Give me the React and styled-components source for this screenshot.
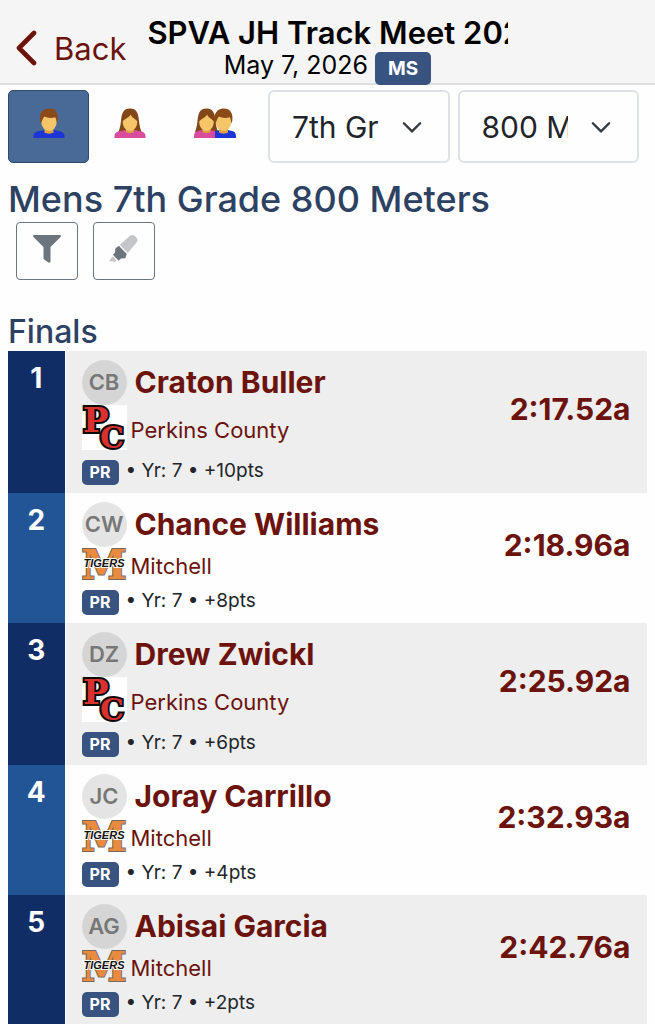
import React from 'react';
import styled, { createGlobalStyle } from 'styled-components';

const GlobalStyle = createGlobalStyle`
  * { box-sizing: border-box; }
  body {
    margin: 0;
    background: #fefefe;
    color: #212529;
    font-family: Inter, "Liberation Sans", sans-serif;
  }
  button, select { font-family: inherit; }
`;

const Header = styled.header`
  display: grid;
  grid-template-columns: 1fr minmax(0, 55%) 1fr;
  padding-top: 14px;
  height: 85px;
  background: #f5f5f5;
  border-bottom: 2px solid #dedede;
`;

const BackButton = styled.button`
  display: flex;
  align-items: center;
  gap: 17px;
  height: 68px;
  padding: 0 0 0 16px;
  border: 0;
  background: none;
  color: #6b130c;
  font-size: 31px;
  white-space: nowrap;
`;

const TitleBlock = styled.div`
  text-align: center;
`;

const Title = styled.h1`
  margin: 0;
  overflow: hidden;
  color: #000;
  font-size: 31px;
  font-weight: 600;
  line-height: 38px;
  text-align: left;
  white-space: nowrap;
`;

const SubTitle = styled.div`
  display: flex;
  justify-content: center;
  gap: 7px;
  color: #000;
  font-size: 25px;
  line-height: 27px;
  white-space: nowrap;
`;

const LevelBadge = styled.span`
  height: 33px;
  padding: 0 13px;
  border-radius: 5px;
  background: #385380;
  color: #fff;
  font-size: 19px;
  font-weight: 700;
  line-height: 33px;
`;

const Toolbar = styled.div`
  display: flex;
  gap: 8px;
  padding: 5px 16px 0 8px;
`;

const GenderGroup = styled.div`
  display: flex;
`;

const GenderButton = styled.button`
  display: flex;
  align-items: center;
  justify-content: center;
  width: ${p => (p.$wide ? 90 : 81)}px;
  height: 73px;
  padding: 0 0 8px;
  border: 1px solid ${p => (p.$active ? '#30486c' : 'transparent')};
  border-radius: 5px;
  background: ${p => (p.$active ? '#496997' : 'none')};
`;

const SelectBox = styled.label`
  position: relative;
  flex: 1;
  min-width: 0;

  svg {
    position: absolute;
    top: 27px;
    right: 28px;
    pointer-events: none;
  }
`;

const Select = styled.select`
  appearance: none;
  width: 100%;
  height: 73px;
  padding: 0 69px 0 22px;
  border: 2px solid #dee2e6;
  border-radius: 6px;
  background: #fefefe;
  color: #212529;
  font-size: 30px;
`;

const Main = styled.main`
  padding: 0 8px;
`;

const EventTitle = styled.h2`
  margin: 14px 0 0;
  color: #2d4262;
  font-size: 36px;
  font-weight: 500;
  line-height: 45px;
`;

const Actions = styled.div`
  display: flex;
  gap: 15px;
  padding: 0 8px;
`;

const ActionButton = styled.button`
  display: flex;
  align-items: center;
  justify-content: center;
  width: 62px;
  height: 58px;
  padding: 0 0 4px;
  border: 1px solid #6c757d;
  border-radius: 4px;
  background: none;
  color: #6c757d;
`;

const RoundTitle = styled.h3`
  margin: 32px 0 0;
  color: #2d4262;
  font-size: 32px;
  font-weight: 500;
  line-height: 39px;
`;

const Results = styled.table`
  width: 100%;
  border-collapse: collapse;
`;

const Row = styled.tr`
  background: #fefefe;

  &:nth-child(odd) { background: #eee; }
`;

const Place = styled.td`
  width: 57px;
  padding: 10px 0 0;
  border-right: 1px solid #fefefe;
  background: #225596;
  color: #fff;
  font-size: 28px;
  font-weight: 700;
  line-height: 34px;
  text-align: center;
  vertical-align: top;

  ${Row}:nth-child(odd) & { background: #112d66; }
`;

const Entry = styled.td`
  padding: 8px 0 8px 16px;
`;

const Athlete = styled.a`
  display: flex;
  align-items: center;
  gap: 8px;
  height: 46px;
  color: #6b130c;
  font-size: 30px;
  font-weight: 700;
  text-decoration: none;
  white-space: nowrap;
`;

const Avatar = styled.span`
  width: 45px;
  height: 45px;
  border-radius: 50%;
  background: rgba(0, 0, 0, .1);
  color: #777;
  font-size: 22px;
  font-weight: 600;
  line-height: 45px;
  text-align: center;
`;

const Team = styled.a`
  display: flex;
  align-items: center;
  gap: 4px;
  color: #6b130c;
  font-size: 22px;
  line-height: 27px;
  text-decoration: none;

  span { padding-top: 6px; }
`;

const Meta = styled.div`
  display: flex;
  gap: 7px;
  padding-top: 10px;
  font-size: 19px;
  line-height: 21px;
`;

const PrBadge = styled.span`
  width: 37px;
  height: 25px;
  border-radius: 5px;
  background: #385380;
  color: #fff;
  font-size: 16px;
  font-weight: 700;
  line-height: 25px;
  text-align: center;
`;

const Mark = styled.td`
  padding: 0 16px 26px 0;
  text-align: right;

  a {
    color: #6b130c;
    font-size: 30px;
    font-weight: 700;
    text-decoration: none;
  }
`;

const BackIcon = () => (
  <svg width="21" height="36" viewBox="0 0 21 36" fill="none" stroke="currentColor" strokeWidth="4.6" strokeLinecap="round" strokeLinejoin="round">
    <path d="M18 3 L3 18 L18 33" />
  </svg>
);

const Chevron = () => (
  <svg width="20" height="20" viewBox="0 0 16 16" fill="none" stroke="#343a40" strokeWidth="1.9" strokeLinecap="round" strokeLinejoin="round">
    <path d="m1.500 5 6.500 6.500L14.500 5" />
  </svg>
);

const FilterIcon = () => (
  <svg width="28" height="28" viewBox="0 0 28 28" fill="currentColor">
    <path d="M1.200 0h25.600c1 0 1.500 1.100.8 1.900L17.500 12v14.600c0 1-1.100 1.500-1.900 1l-4.400-3.100c-.4-.3-.7-.7-.7-1.200V12L.4 1.900C-.3 1.100.2 0 1.200 0z" />
  </svg>
);

const HighlighterIcon = () => (
  <svg width="30" height="28" viewBox="0 0 30 28" fill="currentColor">
    <path opacity=".4" d="M10.800 9.700 20.800 1.100c1.700-1.400 3.900-1.400 5.400.1l1.200 1.300c1.400 1.500 1.400 3.600 0 5.300L18.700 18z" />
    <path d="m9.800 10.800 8 8.200-1.600 4.200-4.300.3-2.200 2.200-5.800-5.900 2.200-2.200.2-4.100z" />
    <path opacity=".4" d="m3.700 21.600 3.800 3.800-1.600 1.600L0 26.100z" />
  </svg>
);

const ManHead = () => (
  <>
    <path d="M11 19h9v5.500c-2 1.500-7 1.500-9 0z" fill="#dda040" />
    <ellipse cx="15.500" cy="14" rx="7.800" ry="9" fill="#f4c669" />
    <path d="M7.500 15.500C4.500 8 8 1.800 13.500.7c7.500-1.400 13 3.300 10.200 14.800-.9-1.800-.6-4.200-1.900-6.200-3.600 1-8.400.7-10.900-.8-2 2-2.200 4.900-3.400 7z" fill="#8a4b18" />
  </>
);

const WomanHead = () => (
  <>
    <path d="M11.500 18h8v6c-2 1.500-6 1.500-8 0z" fill="#dda040" />
    <path d="M8.200 13.500c2-3 5.800-3.500 8-7 1.200 3.500 4.900 4 6.600 7 0 5.500-3.300 9.500-7.300 9.500s-7.300-4-7.300-9.500z" fill="#f4c669" />
  </>
);

const womanHair = 'M15.500.5C8 .5 7 7 6.500 13 6 18 5 21 4 24h23C26 21 25 18 24.500 13 24 7 23 .5 15.500.5z';

const ManIcon = () => (
  <svg width="32" height="30" viewBox="0 0 31 30">
    <path d="M0 30v-2c0-3 2.500-4.500 6.500-5l4.500-1h9l4.500 1c4 .5 6.500 2 6.500 5v2z" fill="#1c35d6" />
    <ManHead />
  </svg>
);

const WomanIcon = () => (
  <svg width="32" height="30" viewBox="0 0 31 30">
    <path d={womanHair} fill="#814719" />
    <path d="M0 30v-2c0-3 2.500-4.500 6.500-5l4.500-1h9l4.500 1c4 .5 6.500 2 6.500 5v2z" fill="#d94b9d" />
    <WomanHead />
  </svg>
);

const CoupleIcon = () => (
  <svg width="42" height="30" viewBox="0 0 42 30">
    <g transform="translate(-3 0)">
      <path d={womanHair} fill="#814719" />
    </g>
    <path d="M0 30v-2c0-3 1.500-4.500 4-5l4-1h8l5 1v7z" fill="#d94b9d" />
    <path d="M21 30v-7l5-1h8l4 1c2.500.5 4 2 4 5v2z" fill="#1c35d6" />
    <g transform="translate(-3 0)"><WomanHead /></g>
    <g transform="translate(14 0)"><ManHead /></g>
  </svg>
);

const PerkinsLogo = () => (
  <svg width="45" height="45" viewBox="0 0 45 45" fontFamily="DejaVu Serif, serif" fontWeight="700" fill="#d9322e" stroke="#0b0b0b" strokeWidth="4" paintOrder="stroke" role="img" aria-label="Perkins County">
    <rect width="45" height="45" fill="#fefefe" stroke="none" />
    <text x="1" y="27" fontSize="34">P</text>
    <text x="18" y="43" fontSize="30">C</text>
  </svg>
);

const MitchellLogo = () => (
  <svg width="45" height="33" viewBox="0 0 45 33" fontWeight="700" role="img" aria-label="Mitchell">
    <text x="22" y="32" textAnchor="middle" fontFamily="DejaVu Serif, serif" fontSize="41" fill="#e98b3e" stroke="#77685c" strokeWidth="2" paintOrder="stroke">M</text>
    <text x="22" y="20" textAnchor="middle" fontFamily="Liberation Sans, sans-serif" fontSize="11" fontStyle="italic" fill="#111" stroke="#fefefe" strokeWidth="2" paintOrder="stroke">TIGERS</text>
  </svg>
);

const logos = {
  'Perkins County': PerkinsLogo,
  Mitchell: MitchellLogo,
};

const results = [
  { place: 1, initials: 'CB', name: 'Craton Buller', team: 'Perkins County', points: 10, mark: '2:17.52a' },
  { place: 2, initials: 'CW', name: 'Chance Williams', team: 'Mitchell', points: 8, mark: '2:18.96a' },
  { place: 3, initials: 'DZ', name: 'Drew Zwickl', team: 'Perkins County', points: 6, mark: '2:25.92a' },
  { place: 4, initials: 'JC', name: 'Joray Carrillo', team: 'Mitchell', points: 4, mark: '2:32.93a' },
  { place: 5, initials: 'AG', name: 'Abisai Garcia', team: 'Mitchell', points: 2, mark: '2:42.76a' },
];

const Result = ({ place, initials, name, team, points, mark }) => {
  const Logo = logos[team];
  return (
    <Row>
      <Place>{place}</Place>
      <Entry>
        <Athlete href="#athlete">
          <Avatar>{initials}</Avatar>
          {name}
        </Athlete>
        <Team href="#team">
          <Logo />
          <span>{team}</span>
        </Team>
        <Meta>
          <PrBadge>PR</PrBadge>
          <span>• Yr: 7 • +{points}pts</span>
        </Meta>
      </Entry>
      <Mark><a href="#mark">{mark}</a></Mark>
    </Row>
  );
};

const App = () => (
  <>
    <GlobalStyle />
    <Header>
      <BackButton type="button"><BackIcon />Back</BackButton>
      <TitleBlock>
        <Title>SPVA JH Track Meet 2026</Title>
        <SubTitle>May 7, 2026 <LevelBadge>MS</LevelBadge></SubTitle>
      </TitleBlock>
    </Header>
    <Toolbar>
      <GenderGroup>
        <GenderButton type="button" $active aria-label="Mens"><ManIcon /></GenderButton>
        <GenderButton type="button" aria-label="Womens"><WomanIcon /></GenderButton>
        <GenderButton type="button" $wide aria-label="Both"><CoupleIcon /></GenderButton>
      </GenderGroup>
      <SelectBox>
        <Select aria-label="Division"><option>7th Grade</option></Select>
        <Chevron />
      </SelectBox>
      <SelectBox>
        <Select aria-label="Event"><option>800 Meters</option></Select>
        <Chevron />
      </SelectBox>
    </Toolbar>
    <Main>
      <EventTitle>Mens 7th Grade 800 Meters</EventTitle>
      <Actions>
        <ActionButton type="button" aria-label="Filter"><FilterIcon /></ActionButton>
        <ActionButton type="button" aria-label="Highlight"><HighlighterIcon /></ActionButton>
      </Actions>
      <RoundTitle>Finals</RoundTitle>
      <Results>
        <tbody>
          {results.map(r => <Result key={r.place} {...r} />)}
        </tbody>
      </Results>
    </Main>
  </>
);

export default App;
